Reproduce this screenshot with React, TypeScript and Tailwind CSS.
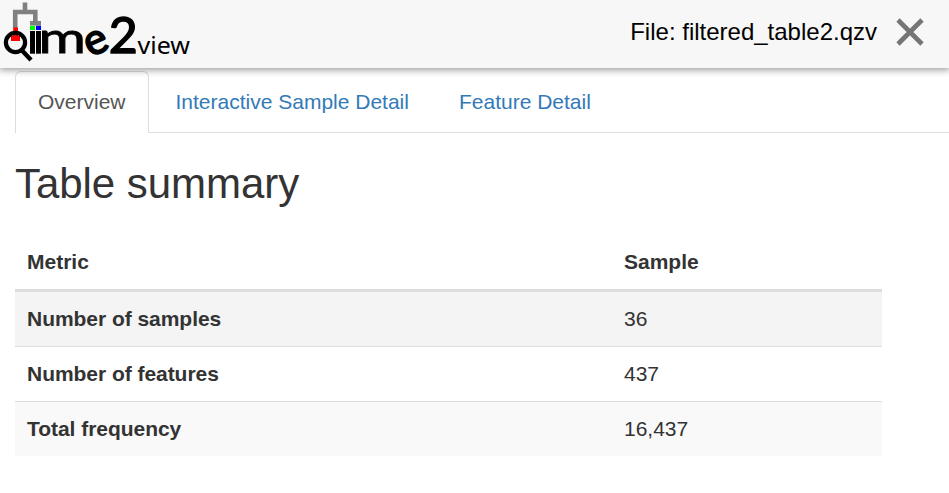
import React from "react";

const rows = [
  { label: "Number of samples", value: "36", style: "h-[56px] bg-[#f4f4f4]" },
  { label: "Number of features", value: "437", style: "h-[55px] border-t border-[#ddd] bg-white" },
  { label: "Total frequency", value: "16,437", style: "h-[55px] border-t border-[#ddd] bg-[#f9f9f9]" },
];

function Logo() {
  return (
    <svg width="200" height="68" viewBox="0 0 200 68" role="img" aria-label="qiime2view">
      <path d="M25 2.5V12M15.2 28V12H35.3V23" fill="none" stroke="#808080" strokeWidth="4.6" />
      <path d="M30 21H41V25.5H30Z" fill="#808080" />
      <path d="M13.2 27.5H18V36H20V41H11V36H13.2Z" fill="#f00" />
      <circle cx="15.5" cy="42.5" r="9.6" fill="none" stroke="#000" strokeWidth="4.2" />
      <path d="M22 50.5L31 60" stroke="#000" strokeWidth="4.4" />
      <rect x="30" y="25.7" width="5" height="4.3" fill="#0f0" />
      <rect x="36" y="25.7" width="5" height="4.3" fill="#00f" />
      <rect x="30" y="31" width="5" height="22.7" />
      <rect x="36" y="31" width="5" height="22.7" />
      <text transform="translate(38.6 53.2) scale(1.34 1)" stroke="#000" strokeWidth="0.8" className="font-['Lato'] text-[43px] font-normal">m</text>
      <text transform="translate(96.6 42.3) rotate(-24) scale(1.03 1.03)" x="-11.6" y="11" stroke="#000" strokeWidth="1.7" className="font-['Lato'] text-[42px] font-normal">e</text>
      <text x="108.8" y="53" stroke="#000" strokeWidth="1.5" className="font-['Lato'] text-[50px] font-normal">2</text>
      <text x="137.5" y="53.5" textLength="52.5" lengthAdjust="spacingAndGlyphs" className="font-['Noto_Sans'] text-[23.5px]">view</text>
    </svg>
  );
}

export default function App() {
  return (
    <div className="h-[493px] w-full overflow-hidden bg-white font-['Liberation_Sans',Arial,sans-serif] text-[21px] leading-[30px] text-[#333]">
      <header className="relative flex h-[68px] items-start justify-between bg-[#f7f7f7] shadow-[0_1px_7px_1px_rgba(0,0,0,0.4)]">
        <Logo />
        <div className="flex pr-[25px] text-[24px] text-black">
          <span className="mt-[17px]">File: filtered_table2.qzv</span>
          <button aria-label="Close" className="mt-[18px] ml-[19px] h-[28px]">
            <svg width="28" height="28" viewBox="0 0 28 28">
              <path d="M2 2L26 26M26 2L2 26" stroke="#757575" strokeWidth="4.6" />
            </svg>
          </button>
        </div>
      </header>
      <nav className="mt-[3px] ml-[15px] flex h-[62px] border-b border-[#ddd]">
        <a className="h-[62px] w-[134px] rounded-t-[6px] border border-b-0 border-[#ddd] bg-white pt-[15px] pl-[22px] text-[#555]">Overview</a>
        <a className="pt-4 pl-[26.5px] text-[#337ab7]">Interactive Sample Detail</a>
        <a className="pt-4 pl-[50px] text-[#337ab7]">Feature Detail</a>
      </nav>
      <main className="pl-[15px]">
        <h1 className="pt-[28px] text-[42px] leading-[46px] tracking-[-0.05px]">Table summary</h1>
        <table className="mt-[26px] w-[867px] table-fixed border-collapse text-left">
          <colgroup>
            <col className="w-[597px]" />
            <col />
          </colgroup>
          <thead>
            <tr className="h-[57px] border-b-3 border-[#ddd]">
              <th className="pt-[2px] pl-3">Metric</th>
              <th className="pt-[2px] pl-3">Sample</th>
            </tr>
          </thead>
          <tbody>
            {rows.map((row) => (
              <tr key={row.label} className={row.style}>
                <th className="pl-3 tracking-[-0.04px]">{row.label}</th>
                <td className="pl-3">{row.value}</td>
              </tr>
            ))}
          </tbody>
        </table>
      </main>
    </div>
  );
}
